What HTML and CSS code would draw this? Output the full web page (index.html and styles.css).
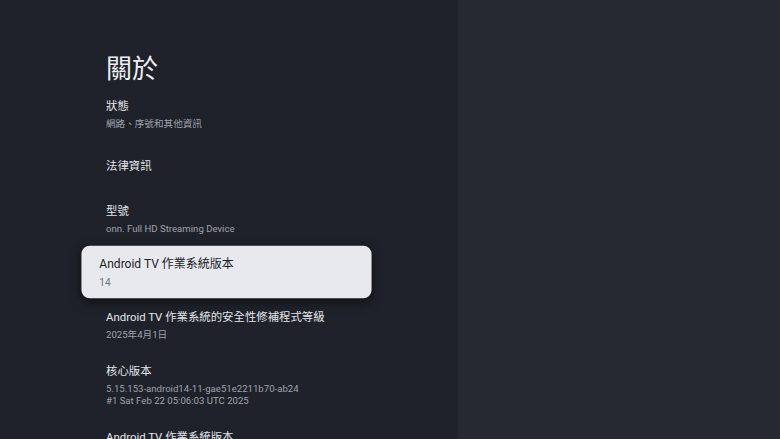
FILE: index.html
```html
<!DOCTYPE html>
<html lang="zh-Hant">
<head>
<meta charset="utf-8">
<title>關於</title>
<link rel="stylesheet" href="styles.css">
</head>
<body>
<div class="screen">
  <main class="panel">
    <h1 class="heading">關於</h1>
    <div class="list">
      <div class="item">
        <div class="title">狀態</div>
        <div class="summary">網路、序號和其他資訊</div>
      </div>
      <div class="item item-single">
        <div class="title">法律資訊</div>
      </div>
      <div class="item">
        <div class="title">型號</div>
        <div class="summary">onn. Full HD Streaming Device</div>
      </div>
      <div class="item item-focused">
        <div class="title">Android TV 作業系統版本</div>
        <div class="summary">14</div>
      </div>
      <div class="item">
        <div class="title">Android TV 作業系統的安全性修補程式等級</div>
        <div class="summary">2025年4月1日</div>
      </div>
      <div class="item">
        <div class="title">核心版本</div>
        <div class="summary">5.15.153-android14-11-gae51e2211b70-ab24<br>#1 Sat Feb 22 05:06:03 UTC 2025</div>
      </div>
      <div class="item">
        <div class="title">Android TV 作業系統版本</div>
      </div>
    </div>
  </main>
  <aside class="side"></aside>
</div>
</body>
</html>
```

FILE: styles.css
```css
html, body {
  margin: 0;
  padding: 0;
  height: 100%;
  overflow: hidden;
}

body {
  font-family: Roboto, "Noto Sans CJK TC", "Noto Sans", sans-serif;
  background: #1f222a;
  color: #e8eaed;
}

.screen {
  display: flex;
  height: 439px;
  overflow: hidden;
}

.panel {
  width: 458px;
  flex: none;
  background: #1f222a;
  padding: 51px 0 0 106px;
  box-sizing: border-box;
}

.side {
  flex: 1;
  background: #262931;
}

.heading {
  margin: 0;
  font-size: 26px;
  line-height: 36px;
  font-weight: 400;
  color: #eceef2;
}

.list {
  display: flex;
  flex-direction: column;
}

.item {
  padding: 11px 0;
}

.item-single {
  padding: 17px 0 18px;
}

.title {
  font-size: 11.4px;
  line-height: 16px;
  color: #e3e5e9;
}

.summary {
  margin-top: 4px;
  font-size: 9.6px;
  line-height: 12px;
  color: #9fa3aa;
}

.item-focused {
  margin: 1px 0 1px -17px;
  width: 275px;
  padding: 9px 0 9px 17px;
  box-sizing: border-box;
  background: #e8e9ee;
  border-radius: 8px;
  transform: scale(1.055);
  box-shadow: 0 3px 10px rgba(0, 0, 0, 0.55);
}

.item-focused .title {
  color: #202124;
}

.item-focused .summary {
  color: #70747b;
}
```
